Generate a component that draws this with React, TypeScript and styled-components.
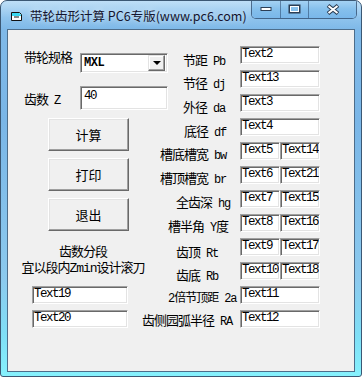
import React from "react";
import styled, { createGlobalStyle } from "styled-components";

const GlobalStyle = createGlobalStyle`
  html, body { margin: 0; padding: 0; background: #ffffff; }
  body { font-family: "Noto Sans CJK SC", "Liberation Sans", sans-serif; }
`;

type Row = { name: string; sym: string; tail?: string; x: number; dy: number; size?: number; cells: string[] };

const rows: Row[] = [
  { name: "节距", sym: "Pb", x: 41, dy: 9, cells: ["Text2"] },
  { name: "节径", sym: "dj", x: 41, dy: 8, cells: ["Text13"] },
  { name: "外径", sym: "da", x: 41, dy: 8, cells: ["Text3"] },
  { name: "底径", sym: "df", x: 42, dy: 8, cells: ["Text4"] },
  { name: "槽底槽宽", sym: "bw", x: 18, dy: 7, cells: ["Text5", "Text14"] },
  { name: "槽顶槽宽", sym: "br", x: 18, dy: 7, cells: ["Text6", "Text21"] },
  { name: "全齿深", sym: "hg", x: 34, dy: 7, cells: ["Text7", "Text15"] },
  { name: "槽半角", sym: "Y", tail: "度", x: 26, dy: 7, cells: ["Text8", "Text16"] },
  { name: "齿顶", sym: "Rt", x: 34, dy: 9, cells: ["Text9", "Text17"] },
  { name: "齿底", sym: "Rb", x: 34, dy: 8, cells: ["Text10", "Text18"] },
  { name: "2倍节顶距", sym: "2a", x: 26, dy: 6, size: 12, cells: ["Text11"] },
  { name: "齿侧园弧半径", sym: "RA", x: 0, dy: 5, cells: ["Text12"] },
];

const WindowIcon = () => (
  <svg width="13" height="11" viewBox="0 0 13 11">
    <path d="M1.5 1.5h8l2 2v6h-10z" fill="#ffffff" stroke="#111" />
    <path d="M2 2h7.3l1.7 1.7V5H2z" fill="#39d7f0" />
    <path d="M4 6h5" stroke="#111" />
  </svg>
);

const MinGlyph = () => (
  <svg width="12" height="6" viewBox="0 0 12 6">
    <rect x="1" y="1.5" width="10" height="3" fill="#fff" stroke="#2c3e55" />
  </svg>
);

const MaxGlyph = () => (
  <svg width="13" height="10" viewBox="0 0 13 10">
    <rect x="1.5" y="1.5" width="10" height="7" fill="none" stroke="#2c3e55" strokeWidth="2" />
    <rect x="2.5" y="2.5" width="8" height="5" fill="none" stroke="#fff" />
  </svg>
);

const CloseGlyph = () => (
  <svg width="14" height="11" viewBox="0 0 14 11">
    <path d="M2 1.5l10 8M12 1.5l-10 8" stroke="#2c3e55" strokeWidth="4" />
    <path d="M2.5 2l9 7M11.5 2l-9 7" stroke="#fff" strokeWidth="2" />
  </svg>
);

const App = () => {
  return (
    <>
      <GlobalStyle />
      <S.Window>
        <S.TitleBar>
          <S.IconBox>
            <WindowIcon />
          </S.IconBox>
          <S.Title>带轮齿形计算 PC6专版(www.pc6.com)</S.Title>
          <S.Controls>
            <S.CtrlButton $w={28}>
              <MinGlyph />
            </S.CtrlButton>
            <S.CtrlButton $w={27}>
              <MaxGlyph />
            </S.CtrlButton>
            <S.CtrlButton $w={47} $last>
              <CloseGlyph />
            </S.CtrlButton>
          </S.Controls>
        </S.TitleBar>

        <S.Client>
          <S.LeftPane>
            <S.FormRow>
              <S.Label $w={56} $dy={-1}>带轮规格</S.Label>
              <S.Combo>
                <S.ComboText>MXL</S.ComboText>
                <S.DropButton>
                  <S.Arrow />
                </S.DropButton>
              </S.Combo>
            </S.FormRow>
            <S.FormRow $gap={13}>
              <S.Label $w={56} $dy={8}>
                齿数<S.Lat>Z</S.Lat>
              </S.Label>
              <S.MultiBox>40</S.MultiBox>
            </S.FormRow>

            <S.ButtonStack>
              <S.Button>计算</S.Button>
              <S.Button>打印</S.Button>
              <S.Button>退出</S.Button>
            </S.ButtonStack>

            <S.Note>
              齿数分段
              <br />
              宜以段内Zmin设计滚刀
            </S.Note>

            <S.LeftFields>
              <S.Field $w={96}>Text19</S.Field>
              <S.Field $w={96}>Text20</S.Field>
            </S.LeftFields>
          </S.LeftPane>

          <S.RightPane>
            {rows.map((r) => (
              <S.ResultRow key={r.name}>
                <S.ResultLabel $x={r.x} $dy={r.dy} $size={r.size ?? 13}>
                  {r.name}
                  <S.Lat>{r.sym}</S.Lat>
                  {r.tail}
                </S.ResultLabel>
                <S.Cells>
                  {r.cells.map((c) => (
                    <S.Field key={c} $w={r.cells.length > 1 ? 40 : 80}>
                      {c}
                    </S.Field>
                  ))}
                </S.Cells>
              </S.ResultRow>
            ))}
          </S.RightPane>
        </S.Client>
      </S.Window>
    </>
  );
};

export default App;

const sunken = `
  box-sizing: border-box;
  background: #ffffff;
  border: 1px solid;
  border-color: #a0a0a0 #ffffff #ffffff #a0a0a0;
  box-shadow: inset 1px 1px #696969, inset -1px -1px #e3e3e3;
`;

const S = {
  Window: styled.div`
    width: 362px;
    height: 377px;
    box-sizing: border-box;
    display: flex;
    flex-direction: column;
    border: 1px solid #3b5874;
    border-radius: 7px 7px 3px 3px;
    overflow: hidden;
    background: linear-gradient(
      180deg,
      #a9d4f4 0px,
      #7fb9e8 28px,
      #7ab6e7 120px,
      #8ccaee 280px,
      #7fdff6 335px,
      #86f1fd 100%
    );
  `,
  TitleBar: styled.div`
    height: 28px;
    display: flex;
    align-items: flex-start;
    background: linear-gradient(180deg, rgba(255, 255, 255, 0.25), rgba(255, 255, 255, 0) 60%);
  `,
  IconBox: styled.div`
    display: flex;
    margin: 10px 0 0 9px;
  `,
  Title: styled.div`
    margin: 6px 0 0 7px;
    font-size: 12.5px;
    line-height: 17px;
    color: #14142e;
    white-space: nowrap;
    text-shadow: 0 0 6px rgba(255, 255, 255, 0.8);
  `,
  Controls: styled.div`
    display: flex;
    margin: -1px 4px 0 auto;
    height: 19px;
    box-sizing: border-box;
    border: 1px solid rgba(40, 70, 105, 0.75);
    border-top: none;
    border-radius: 0 0 5px 5px;
    overflow: hidden;
    box-shadow: inset 0 0 0 1px rgba(255, 255, 255, 0.35);
  `,
  CtrlButton: styled.div<{ $w: number; $last?: boolean }>`
    width: ${(p) => p.$w}px;
    display: flex;
    align-items: center;
    justify-content: center;
    background: linear-gradient(180deg, #a8d4f4, #86c0ec 50%, #79b7ea);
    border-right: ${(p) => (p.$last ? "none" : "1px solid rgba(40, 70, 105, 0.55)")};
  `,
  Client: styled.div`
    flex: 1;
    margin: 0 6px 4px;
    border: 1px solid #4d6d8a;
    background: #f0f0f0;
    display: grid;
    grid-template-columns: 134px 1fr;
    font-family: "Liberation Mono", "Noto Sans CJK SC", monospace;
    font-size: 13px;
    letter-spacing: -1px;
    color: #000;
  `,
  Lat: styled.span`
    font-family: "Liberation Mono", monospace;
    font-size: 12px;
    letter-spacing: -1.2px;
    margin-left: 6px;
  `,
  LeftPane: styled.div`
    display: flex;
    flex-direction: column;
    padding-top: 23px;
  `,
  FormRow: styled.div<{ $gap?: number }>`
    display: flex;
    align-items: flex-start;
    margin: ${(p) => p.$gap ?? 0}px 0 0 16px;
  `,
  Label: styled.div<{ $w: number; $dy: number }>`
    width: ${(p) => p.$w}px;
    flex-shrink: 0;
    margin-top: ${(p) => p.$dy}px;
    line-height: 14px;
    white-space: nowrap;
  `,
  Combo: styled.div`
    ${sunken}
    width: 88px;
    height: 20px;
    flex-shrink: 0;
    display: flex;
    align-items: center;
    justify-content: space-between;
    padding: 2px;
  `,
  ComboText: styled.span`
    font-weight: bold;
    font-size: 12px;
    letter-spacing: -0.5px;
    padding-left: 1px;
    line-height: 14px;
  `,
  DropButton: styled.div`
    box-sizing: border-box;
    width: 17px;
    height: 16px;
    background: #f0f0f0;
    border: 1px solid;
    border-color: #e3e3e3 #696969 #696969 #e3e3e3;
    box-shadow: inset -1px -1px #a0a0a0, inset 1px 1px #fff;
    display: flex;
    align-items: center;
    justify-content: center;
  `,
  Arrow: styled.div`
    width: 0;
    height: 0;
    border-left: 4px solid transparent;
    border-right: 4px solid transparent;
    border-top: 4px solid #000;
  `,
  MultiBox: styled.div`
    ${sunken}
    width: 88px;
    height: 24px;
    flex-shrink: 0;
    padding: 2px 3px;
    font-size: 12.5px;
    letter-spacing: -1.5px;
    line-height: 14px;
  `,
  ButtonStack: styled.div`
    display: flex;
    flex-direction: column;
    gap: 7px;
    margin: 8px 0 0 40px;
  `,
  Button: styled.button`
    width: 81px;
    height: 33px;
    box-sizing: border-box;
    padding: 0;
    background: #f0f0f0;
    border: 1px solid;
    border-color: #ffffff #696969 #696969 #ffffff;
    box-shadow: inset -1px -1px #a0a0a0, inset 1px 1px #e3e3e3;
    font-family: "Noto Sans CJK SC", sans-serif;
    font-size: 13px;
    color: #000;
  `,
  Note: styled.div`
    width: 124px;
    margin: 14px 0 0 13px;
    line-height: 16px;
    text-align: center;
    white-space: nowrap;
  `,
  LeftFields: styled.div`
    display: flex;
    flex-direction: column;
    gap: 6px;
    margin: 9px 0 0 24px;
  `,
  Field: styled.div<{ $w: number }>`
    ${sunken}
    width: ${(p) => p.$w}px;
    height: 18px;
    padding: 0 1px;
    font-size: 12.5px;
    letter-spacing: -1.5px;
    line-height: 14px;
    white-space: nowrap;
    overflow: hidden;
  `,
  RightPane: styled.div`
    display: flex;
    flex-direction: column;
    padding-top: 16px;
  `,
  ResultRow: styled.div`
    display: grid;
    grid-template-columns: 98px auto;
    height: 24px;
  `,
  ResultLabel: styled.div<{ $x: number; $dy: number; $size: number }>`
    padding: ${(p) => p.$dy}px 0 0 ${(p) => p.$x}px;
    font-size: ${(p) => p.$size}px;
    line-height: 14px;
    white-space: nowrap;
  `,
  Cells: styled.div`
    display: flex;
    align-items: flex-start;
  `,
};
